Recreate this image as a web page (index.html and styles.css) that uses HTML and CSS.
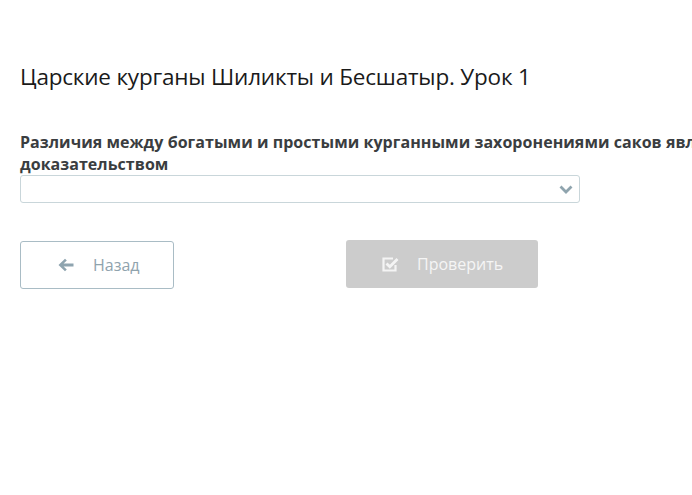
FILE: index.html
```html
<!DOCTYPE html>
<html lang="ru">
<head>
<meta charset="utf-8">
<link rel="stylesheet" href="styles.css">
</head>
<body>
<div class="page">
  <h1 class="title">Царские курганы Шиликты и Бесшатыр. Урок 1</h1>
  <div class="question">
    <p class="q-text">Различия между богатыми и простыми курганными захоронениями саков являются доказательством</p>
    <div class="select">
      <svg class="chev" width="14" height="10" viewBox="0 0 14 10"><path d="M1.5 2.5 L7 8 L12.5 2.5" fill="none" stroke="#8fa4ae" stroke-width="2.8"/></svg>
    </div>
  </div>
  <div class="actions">
    <button class="btn btn-back">
      <svg width="16" height="14" viewBox="0 0 16 14"><path d="M0.5 7 L7 0.8 L8.8 2.6 L5.6 5.5 L15.5 5.5 L15.5 8.5 L5.6 8.5 L8.8 11.4 L7 13.2 Z" fill="#8ea4af"/></svg>
      <span>Назад</span>
    </button>
    <button class="btn btn-check">
      <svg width="17" height="15" viewBox="0 0 17 15"><path d="M11 1.5 H1.5 V13.5 H13.5 V8" fill="none" stroke="#f4f4f4" stroke-width="2.2"/><path d="M4.5 6.5 L7.8 9.8 L15.5 2" fill="none" stroke="#f4f4f4" stroke-width="2.8"/></svg>
      <span>Проверить</span>
    </button>
  </div>
</div>
</body>
</html>
```
FILE: styles.css
```css
html, body {
  margin: 0;
  padding: 0;
  background: #fff;
  overflow: hidden;
}
body {
  font-family: "Open Sans", "Liberation Sans", sans-serif;
  color: #222;
}
.page {
  padding: 61px 0 0 20px;
  width: 820px;
}
.title {
  margin: 0;
  font-weight: 400;
  font-size: 22.5px;
  line-height: 32px;
  color: #1a1a1a;
  letter-spacing: -0.2px;
}
.question {
  margin-top: 38px;
}
.q-text {
  margin: 0;
  font-weight: 700;
  font-size: 16px;
  line-height: 22px;
  color: #3a3d40;
  letter-spacing: 0.05px;
}
.select {
  width: 552px;
  height: 26px;
  border: 1px solid #c9d6da;
  border-radius: 3px;
  display: flex;
  align-items: center;
  justify-content: flex-end;
  padding-right: 6px;
  box-sizing: content-box;
}
.chev { display: block; }
.actions {
  display: flex;
  gap: 172px;
  margin-top: 37px;
  align-items: flex-start;
}
.btn {
  font-family: inherit;
  font-size: 16px;
  display: flex;
  align-items: center;
  border-radius: 3px;
  height: 48px;
  box-sizing: border-box;
  cursor: pointer;
  padding: 0;
}
.btn-back {
  width: 154px;
  background: #fff;
  border: 1px solid #a9bcc5;
  color: #8fa3ad;
  padding-left: 37px;
  gap: 19px;
  margin-top: 1px;
}
.btn-check {
  width: 192px;
  background: #cccccc;
  border: none;
  color: #f5f5f5;
  padding-left: 36px;
  gap: 18px;
}
.btn svg { display: block; }
```
